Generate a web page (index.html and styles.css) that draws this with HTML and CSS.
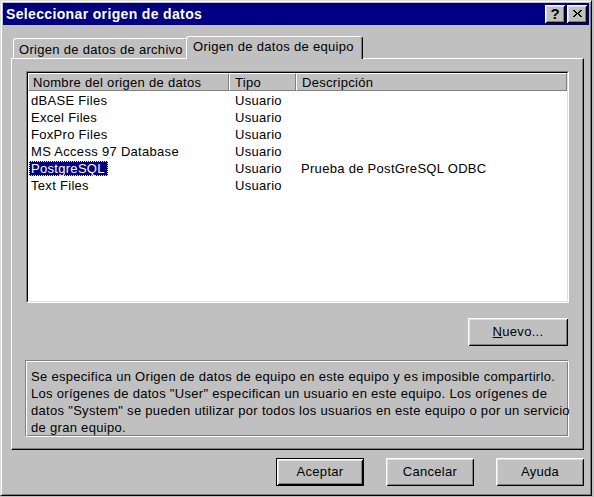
FILE: index.html
```html
<!DOCTYPE html>
<html lang="es">
<head>
<meta charset="utf-8">
<title>Seleccionar origen de datos</title>
<link rel="stylesheet" href="styles.css">
</head>
<body>
<div class="window">
  <div class="titlebar">
    <span class="title">Seleccionar origen de datos</span>
    <div class="title-buttons">
      <div class="tbtn help">?</div>
      <div class="tbtn close">
        <svg width="9" height="7" viewBox="0 0 9 7"><path d="M0 0h2v1h-2zM7 0h2v1h-2zM1 1h2v1h-2zM6 1h2v1h-2zM2 2h2v1h-2zM5 2h2v1h-2zM3 3h3v1h-3zM2 4h2v1h-2zM5 4h2v1h-2zM1 5h2v1h-2zM6 5h2v1h-2zM0 6h2v1h-2zM7 6h2v1h-2z" fill="#000"/></svg>
      </div>
    </div>
  </div>
  <div class="client">
    <div class="tabs">
      <div class="tab">Origen de datos de archivo</div>
      <div class="tab active">Origen de datos de equipo</div>
    </div>
    <div class="panel">
      <div class="list">
        <div class="list-inner">
          <div class="list-head">
            <div class="hcell c1">Nombre del origen de datos</div>
            <div class="hcell c2">Tipo</div>
            <div class="hcell c3">Descripción</div>
          </div>
          <div class="rows">
            <div class="row"><div class="cell c1"><span class="item">dBASE Files</span></div><div class="cell c2">Usuario</div><div class="cell c3"></div></div>
            <div class="row"><div class="cell c1"><span class="item">Excel Files</span></div><div class="cell c2">Usuario</div><div class="cell c3"></div></div>
            <div class="row"><div class="cell c1"><span class="item">FoxPro Files</span></div><div class="cell c2">Usuario</div><div class="cell c3"></div></div>
            <div class="row"><div class="cell c1"><span class="item">MS Access 97 Database</span></div><div class="cell c2">Usuario</div><div class="cell c3"></div></div>
            <div class="row"><div class="cell c1"><span class="item sel">PostgreSQL</span></div><div class="cell c2">Usuario</div><div class="cell c3">Prueba de PostGreSQL ODBC</div></div>
            <div class="row"><div class="cell c1"><span class="item">Text Files</span></div><div class="cell c2">Usuario</div><div class="cell c3"></div></div>
          </div>
        </div>
      </div>
      <div class="actions">
        <div class="btn nuevo"><span><u>N</u>uevo...</span></div>
      </div>
      <div class="desc">Se especifica un Origen de datos de equipo en este equipo y es imposible compartirlo.<br>Los orígenes de datos "User" especifican un usuario en este equipo. Los orígenes de<br>datos "System" se pueden utilizar por todos los usuarios en este equipo o por un servicio<br>de gran equipo.</div>
    </div>
    <div class="footer">
      <div class="btn default">Aceptar</div>
      <div class="btn">Cancelar</div>
      <div class="btn">Ayuda</div>
    </div>
  </div>
</div>
</body>
</html>
```

FILE: styles.css
```css
* { box-sizing: border-box; }

body {
  margin: 0;
  background: #c0c0c0;
  font-family: "Liberation Sans", Arial, sans-serif;
  font-size: 13px;
  letter-spacing: 0.3px;
  color: #000;
}

.window {
  width: 592px;
  height: 496px;
  background: #c0c0c0;
  border: 1px solid;
  border-color: #dfdfdf #000 #000 #dfdfdf;
  box-shadow: inset 1px 1px #fff, inset -1px -1px #808080;
  padding: 2px;
  display: flex;
  flex-direction: column;
}

.titlebar {
  height: 22px;
  flex: none;
  background: #000080;
  color: #fff;
  display: flex;
  align-items: center;
  justify-content: space-between;
  padding: 0 2px 0 3px;
}

.title {
  font-weight: bold;
  font-size: 14px;
  letter-spacing: 0.35px;
}

.title-buttons {
  display: flex;
  gap: 2px;
}

.tbtn {
  width: 20px;
  height: 18px;
  background: #c0c0c0;
  box-shadow: inset 1px 1px #fff, inset -1px -1px #000, inset 2px 2px #dfdfdf, inset -2px -2px #808080;
  display: flex;
  align-items: center;
  justify-content: center;
  color: #000;
}

.help {
  font-weight: bold;
  font-size: 15px;
  letter-spacing: 0;
  line-height: 18px;
  padding-bottom: 1px;
}

.close svg {
  display: block;
  margin-top: -1px;
}

.client {
  padding: 11px 5px 0 8px;
  display: flex;
  flex-direction: column;
}

.tabs {
  display: flex;
  align-items: flex-end;
  height: 22px;
  padding-left: 2px;
}

.tab {
  width: 175px;
  height: 20px;
  border: 1px solid;
  border-bottom: none;
  border-color: #fff #000 transparent #fff;
  border-radius: 3px 3px 0 0;
  box-shadow: inset -1px 0 #808080;
  padding: 1px 0 0 5px;
  line-height: 19px;
  white-space: nowrap;
  background: #c0c0c0;
}

.tab.active {
  width: 177px;
  height: 23px;
  margin-left: -2px;
  margin-bottom: -1px;
  padding: 0 0 0 6px;
  line-height: 20px;
  position: relative;
  z-index: 1;
}

.panel {
  width: 573px;
  height: 392px;
  border: 1px solid;
  border-color: #fff #000 #000 #fff;
  box-shadow: inset -1px -1px #808080;
  padding: 12px 14px 0 14px;
  display: flex;
  flex-direction: column;
}

.list {
  height: 232px;
  flex: none;
  border: 1px solid;
  border-color: #808080 #fff #fff #808080;
}

.list-inner {
  height: 100%;
  border: 1px solid;
  border-color: #000 #dfdfdf #dfdfdf #000;
  background: #fff;
}

.list-head {
  display: flex;
  height: 18px;
}

.hcell {
  background: #c0c0c0;
  border: 1px solid;
  border-color: #fff #808080 #808080 #fff;
  padding: 1px 0 0 4px;
  line-height: 15px;
  white-space: nowrap;
}

.c1 { width: 201px; flex: none; }
.c2 { width: 67px; flex: none; }
.c3 { flex: 1; }

.hcell.c2, .hcell.c3 { padding-left: 5px; }

.rows {
  padding-top: 1px;
}

.row {
  display: flex;
  height: 17px;
  line-height: 17px;
  white-space: nowrap;
}

.cell.c1 { padding-left: 1px; }
.cell.c2 { padding-left: 6px; }
.cell.c3 { padding-left: 5px; }

.item {
  padding: 0 2px;
}

.item.sel {
  display: inline-block;
  vertical-align: top;
  height: 15px;
  line-height: 15px;
  margin-top: 1px;
  padding: 0 3px 0 2px;
  background: #000080;
  color: #fff;
  outline: 1px dotted #ffff60;
  outline-offset: -1px;
}

.actions {
  display: flex;
  justify-content: flex-end;
  margin-top: 15px;
  padding-right: 1px;
}

.btn {
  width: 88px;
  height: 28px;
  display: flex;
  align-items: center;
  justify-content: center;
  background: #c0c0c0;
  box-shadow: inset 1px 1px #fff, inset -1px -1px #000, inset 2px 2px #dfdfdf, inset -2px -2px #808080;
  padding-bottom: 1px;
}

.btn.nuevo { width: 100px; }

.btn.default {
  border: 1px solid #000;
}

.desc {
  margin-top: 14px;
  margin-left: -1px;
  height: 77px;
  border: 1px solid;
  border-color: #808080 #fff #fff #808080;
  box-shadow: inset 1px 1px #fff, inset -1px -1px #808080;
  padding: 7px 5px 0 5px;
  line-height: 17px;
  white-space: nowrap;
}

.footer {
  display: flex;
  justify-content: flex-end;
  gap: 22px;
  margin-top: 8px;
}
```
